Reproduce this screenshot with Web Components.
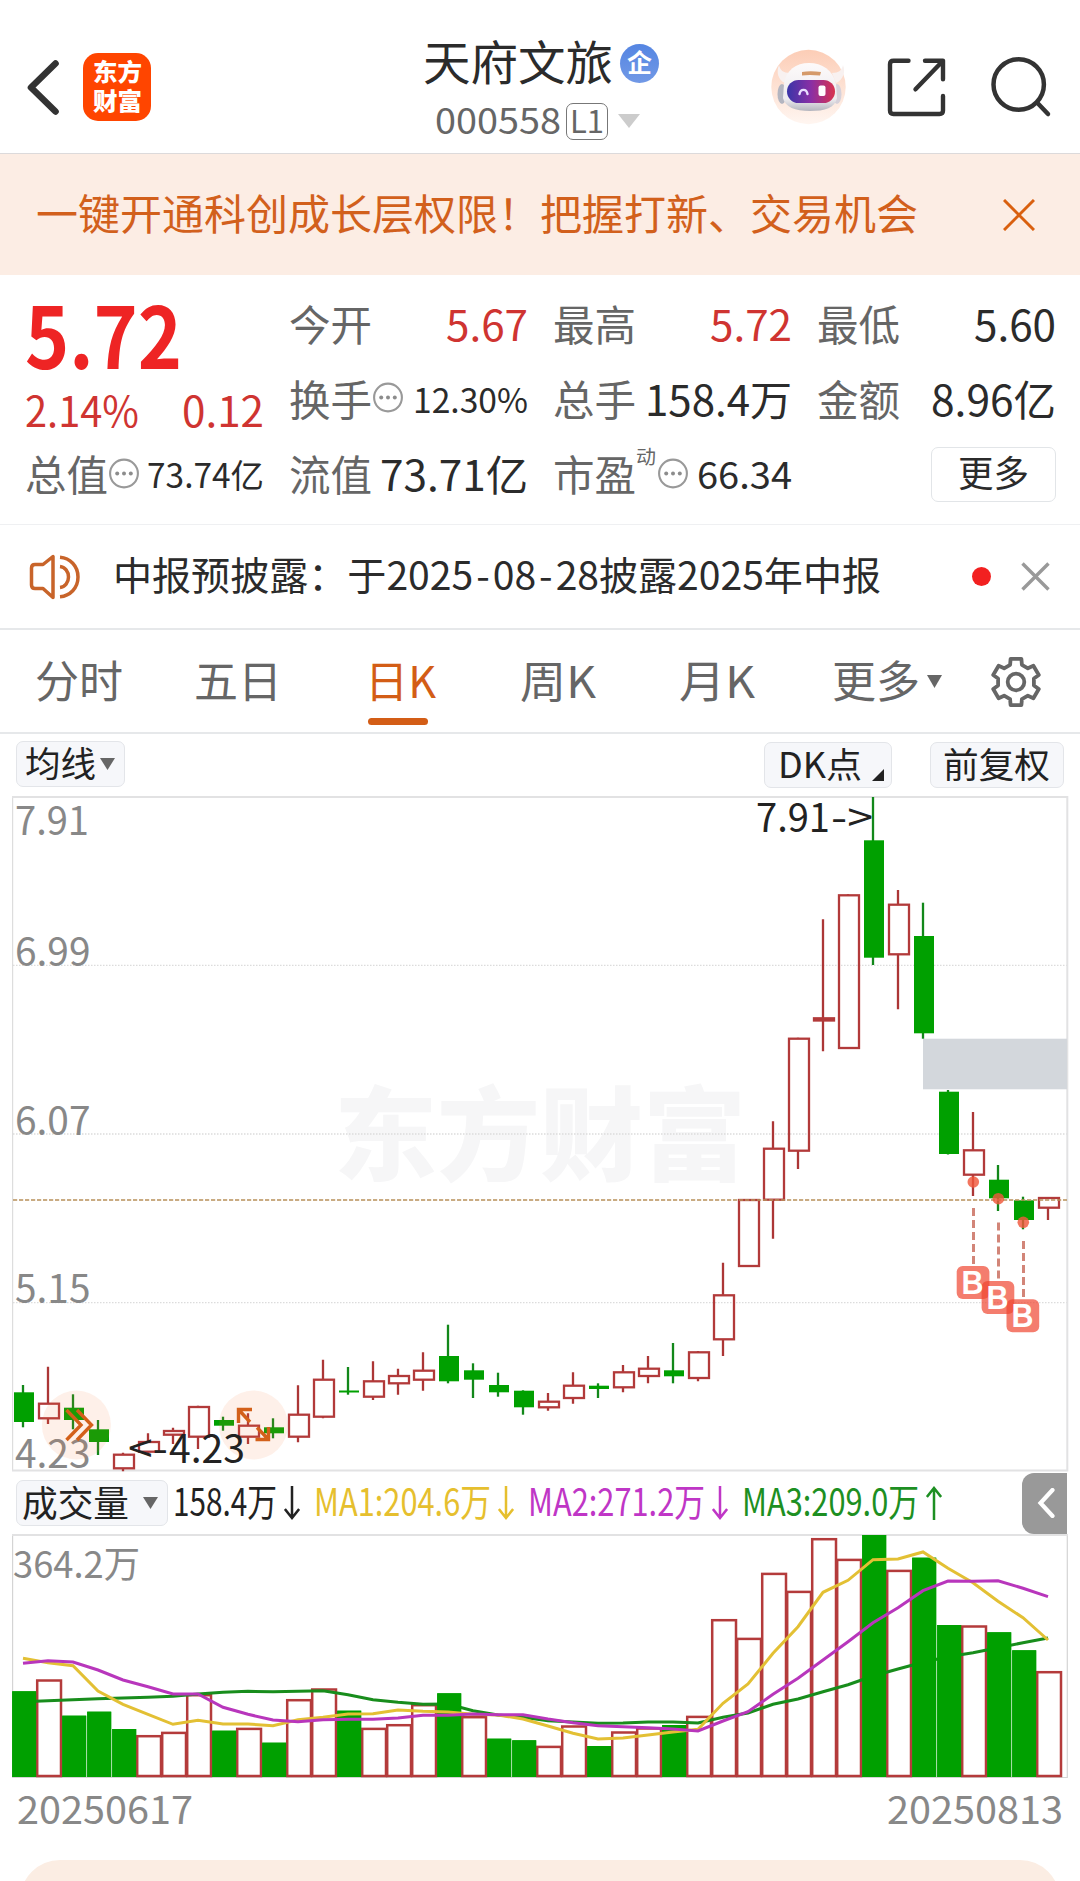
<!DOCTYPE html>
<html lang="zh-CN">
<head>
<meta charset="utf-8">
<title>天府文旅 000558</title>
<style>
body{margin:0;background:#fff;width:1080px;height:1881px;overflow:hidden;font-family:"Noto Sans CJK SC","Noto Sans",sans-serif;color:#2b2b2b}
</style>
</head>
<body>
<stock-page></stock-page>
<script>
const define = (name, html, setup) => customElements.define(name, class extends HTMLElement {
  connectedCallback() {
    if (this.shadowRoot) return;
    const t = document.createElement('template');
    t.innerHTML = html;
    this.attachShadow({mode: 'open'}).appendChild(t.content.cloneNode(true));
    if (setup) setup(this, this.shadowRoot);
  }
});

/* A single line of text set to an exact width: w = width, s = font size, fw = weight */
define('fit-text', `<style>
:host{display:flex;align-items:center;flex:none;line-height:1;white-space:pre}
span{display:inline-block;transform-origin:0 50%}
</style><span><slot></slot></span>`, (el, root) => {
  const w = +el.getAttribute('w'), s = +el.getAttribute('s');
  const span = root.querySelector('span');
  el.style.width = w + 'px';
  el.style.height = s + 'px';
  el.style.fontSize = s + 'px';
  if (el.hasAttribute('fw')) el.style.fontWeight = el.getAttribute('fw');
  const k = w / span.getBoundingClientRect().width;
  span.style.transform = `translateY(${-0.066 * s}px) scaleX(${k})`;
});

define('info-dot', `<style>:host{display:block;flex:none;width:30px;height:31px}svg{display:block}</style>
<svg width="30" height="31" viewBox="0 0 30 31"><circle cx="15" cy="15.5" r="13.9" fill="none" stroke="#999" stroke-width="2.1"/><g fill="#8c8c8c"><circle cx="8.2" cy="15.5" r="2"/><circle cx="15" cy="15.5" r="2"/><circle cx="21.8" cy="15.5" r="2"/></g></svg>`);

define('quote-cell', `<style>:host{display:flex;align-items:center;height:75px}
.l{display:flex;align-items:center;color:#666}.v{margin-left:auto;display:flex}</style>
<div class="l"><slot name="label"></slot></div><div class="v"><slot></slot></div>`);

define('chip-button', `<style>:host{display:flex;align-items:center;box-sizing:border-box;flex:none;height:46px;border:1.5px solid #e3e5e9;border-radius:7px;background:#f6f7fa;color:#222}</style><slot></slot>`);

define('app-header', `<style>
:host{display:flex;box-sizing:border-box;height:154px;border-bottom:1px solid #dcdadb;background:#fff}
svg{display:block;flex:none}
.logo{display:flex;flex-direction:column;align-items:center;gap:5px;box-sizing:border-box;width:68px;height:68px;margin:53px 0 0 24px;padding-top:8px;border-radius:15px;background:#ff4500;color:#fff}
.mid{margin-left:272px;width:236px}
.r1{display:flex;align-items:center;height:46px;margin-top:39px}
.badge{display:flex;align-items:center;justify-content:center;width:39px;height:39px;border-radius:50%;margin:3px 0 0 7px;background:linear-gradient(#5585e2,#7199e6);color:#fff}
.r2{display:flex;align-items:center;height:36px;margin:18px 0 0 12px;color:#666}
.l1{display:flex;align-items:center;justify-content:center;box-sizing:border-box;width:42px;height:37px;border:1.5px solid #777;border-radius:7px;margin-left:5px}
</style>
<svg style="margin:58px 0 0 24px" width="35" height="60" viewBox="24 58 35 60"><path d="M55.5 63.5 31 87.5l24.500 24" fill="none" stroke="#333" stroke-width="6.6" stroke-linejoin="round" stroke-linecap="round"/></svg>
<div class="logo"><fit-text w="49" s="24" fw="900">东方</fit-text><fit-text w="49" s="24" fw="900">财富</fit-text></div>
<div class="mid">
 <div class="r1"><fit-text w="190" s="47">天府文旅</fit-text><div class="badge"><fit-text w="25" s="25" fw="700">企</fit-text></div></div>
 <div class="r2"><fit-text w="126" s="35.5">000558</fit-text><div class="l1"><fit-text w="34" s="31">L1</fit-text></div>
 <svg style="margin-left:10px" width="22" height="14"><path d="M0 0h22L11 14z" fill="#ccc"/></svg></div>
</div>
<svg style="margin:49px 0 0 111px" width="76" height="76" viewBox="770 49 76 76">
 <defs><linearGradient id="bg" x2="0" y2="1"><stop offset="0" stop-color="#fccdb6"/><stop offset="1" stop-color="#fff6f1"/></linearGradient>
 <linearGradient id="vz"><stop offset="0" stop-color="#3a35a8"/><stop offset=".5" stop-color="#8a2fa5"/><stop offset="1" stop-color="#d8334f"/></linearGradient>
 <linearGradient id="hd" x2="0" y2="1"><stop offset="0" stop-color="#fdfafa"/><stop offset=".75" stop-color="#eeecef"/><stop offset="1" stop-color="#b4b5be"/></linearGradient></defs>
 <circle cx="808.500" cy="87" r="37.200" fill="url(#bg)"/>
 <path d="M779 65c1 5 4 8 11 8l-5 10c-7-3-9-11-6-18zM843 65c-1 5-4 8-11 8l4 10c7-3 10-11 7-18z" fill="#f8f1f0"/>
 <ellipse cx="782" cy="94" rx="4.500" ry="10" fill="#b3b5c0"/><ellipse cx="837" cy="94" rx="4.500" ry="10" fill="#d6d1da"/>
 <path d="M784 84c2-14 12-21 25-21s24 7 27 21l1 14c-2 10-12 13-27 13s-25-4-27-13z" fill="url(#hd)"/>
 <path d="M802 72q8-1.500 19 0l-1 3.500q-11-1-18 0z" fill="#d59a6a"/>
 <rect x="787" y="80" width="48" height="23" rx="11.500" fill="url(#vz)"/>
 <path d="M799.500 94c1-5.500 7-5.500 8 0" fill="none" stroke="#e9ddff" stroke-width="2.400" stroke-linecap="round"/><rect x="818.500" y="85.500" width="7" height="10.500" rx="2" fill="#fff"/>
</svg>
<svg style="margin:54px 0 0 38px" width="66" height="66" viewBox="884 54 66 66" fill="none" stroke="#333" stroke-width="4.400" stroke-linecap="round" stroke-linejoin="round"><path d="M908.500 60.800H893.500q-3.500 0-3.500 3.500V110.500q0 3.500 3.500 3.500h46q3.500 0 3.500-3.500V96M925 60.800h18v18.500M943 60.800 915.500 89.300"/></svg>
<svg style="margin:54px 0 0 38px" width="66" height="66" viewBox="988 54 66 66" fill="none" stroke="#333" stroke-width="4.500" stroke-linecap="round"><circle cx="1018.700" cy="84.500" r="25.200"/><path d="m1037.500 103 10.500 11"/></svg>
`);

define('promo-banner', `<style>:host{display:flex;align-items:center;box-sizing:border-box;height:121px;padding:0 45px 0 36px;background:#fcede4;color:#d2601c;justify-content:space-between}svg{display:block}</style>
<fit-text w="882" s="42"><slot></slot></fit-text>
<svg width="32" height="32"><path d="M1 1 31 31M31 1 1 31" stroke="#d9600f" stroke-width="3"/></svg>`);

define('quote-panel', `<style>
:host{display:flex;gap:25px;box-sizing:border-box;height:250px;padding:12px 24px 0 25px;border-bottom:1px solid #eff0f2}
.c{width:239px;flex:none}
.c>quote-cell{position:relative;top:1px}
.p{height:100px;display:flex;align-items:center;color:#ee2424}
.q{height:50px;display:flex;align-items:center;justify-content:space-between}
.red{color:#cf3431}
.btn{display:flex;align-items:center;justify-content:center;box-sizing:border-box;width:125px;height:55px;border:1.5px solid #e2e5e8;border-radius:7px;margin-top:-3px}
</style>
<div class="c">
 <div class="p"><fit-text w="157" s="85" fw="700">5.72</fit-text></div>
 <div class="q red"><fit-text w="114" s="42">2.14%</fit-text><fit-text w="82" s="42">0.12</fit-text></div>
 <quote-cell><fit-text slot="label" w="83" s="42">总值</fit-text><info-dot slot="label" style="margin:-5px 0 0 1px"></info-dot><fit-text w="117" s="33.500">73.74亿</fit-text></quote-cell>
</div>
<div class="c">
 <quote-cell><fit-text slot="label" w="83" s="42">今开</fit-text><fit-text class="red" w="82" s="42">5.67</fit-text></quote-cell>
 <quote-cell><fit-text slot="label" w="83" s="42">换手</fit-text><info-dot slot="label" style="margin:-6px 0 0 1px"></info-dot><fit-text w="115" s="34.500">12.30%</fit-text></quote-cell>
 <quote-cell><fit-text slot="label" w="83" s="42">流值</fit-text><fit-text w="148" s="42">73.71亿</fit-text></quote-cell>
</div>
<div class="c">
 <quote-cell><fit-text slot="label" w="83" s="42">最高</fit-text><fit-text class="red" w="82" s="42">5.72</fit-text></quote-cell>
 <quote-cell><fit-text slot="label" w="83" s="42">总手</fit-text><fit-text w="147" s="42">158.4万</fit-text></quote-cell>
 <quote-cell><fit-text slot="label" w="83" s="42">市盈</fit-text><fit-text slot="label" w="20" s="19.500" style="margin-bottom:38px">动</fit-text><info-dot slot="label" style="margin:-5px 0 0 2px"></info-dot><fit-text w="95" s="37">66.34</fit-text></quote-cell>
</div>
<div class="c">
 <quote-cell><fit-text slot="label" w="83" s="42">最低</fit-text><fit-text w="82" s="42">5.60</fit-text></quote-cell>
 <quote-cell><fit-text slot="label" w="83" s="42">金额</fit-text><fit-text w="125" s="42">8.96亿</fit-text></quote-cell>
 <quote-cell><div class="btn"><fit-text w="71" s="36" style="margin-top:-3px">更多</fit-text></div></quote-cell>
</div>`);

define('notice-bar', `<style>:host{display:flex;align-items:center;box-sizing:border-box;height:105px;padding-left:29px;border-bottom:2px solid #e6e8ea}svg{display:block;flex:none}i{width:19px;height:19px;border-radius:50%;background:#f22020;margin:0 30px 0 91px}</style>
<svg width="52" height="46" viewBox="0 0 52 46" fill="none" stroke="#c8642a" stroke-width="3.500" stroke-linejoin="round"><path d="M24 2.500v41L14 34.500H6Q2.500 34.500 2.500 31V14Q2.500 10.500 6 10.500h8z"/><path d="M31 12.500c5 .5 8.500 5 8.500 10.500S36 33 31 33.500M31 3.300C41 4 49 12 49 23s-8 19-18 19.700"/></svg>
<fit-text w="768" s="39" style="margin-left:32px"><slot></slot></fit-text>
<i></i><svg width="29" height="29"><path d="M1.500 1.500 27.500 27.500M27.500 1.500 1.500 27.500" stroke="#999" stroke-width="3.400"/></svg>`);

define('period-tabs', `<style>:host{display:flex;box-sizing:border-box;height:104px;border-bottom:2px solid #e6e8ea;color:#666}
.t{display:flex;flex-direction:column;height:102px;flex:none}.t fit-text{margin-top:30px}
.on{color:#d35d16}.on b{display:block;width:60px;height:7px;border-radius:4px;background:#d35d16;margin:14px 0 0 3px}svg{display:block;flex:none}</style>
<div class="t" style="margin-left:35px"><fit-text w="88" s="44">分时</fit-text></div>
<div class="t" style="margin-left:71px"><fit-text w="88" s="44">五日</fit-text></div>
<div class="t on" style="margin-left:83px"><fit-text w="71" s="44">日K</fit-text><b></b></div>
<div class="t" style="margin-left:84px"><fit-text w="76" s="44">周K</fit-text></div>
<div class="t" style="margin-left:83px"><fit-text w="76" s="44">月K</fit-text></div>
<div class="t" style="margin-left:77px"><fit-text w="88" s="44">更多</fit-text></div>
<svg style="margin:45px 0 0 7px" width="15" height="13"><path d="M0 0h15L7.500 13z" fill="#666"/></svg>
<svg style="margin:24px 0 0 46px" width="56" height="56" viewBox="-28 -28 56 56" fill="none" stroke="#666" stroke-width="3.800" stroke-linejoin="round"><circle r="8.300"/><path id="g"/></svg>`, (el, root) => {
  /* six-tooth gear outline */
  const p = [];
  for (let i = 0; i < 6; i++) for (const [a, r] of [[-19, 18.2], [-13, 23.8], [13, 23.8], [19, 18.2]]) {
    const t = (i * 60 - 90 + a) * Math.PI / 180;
    p.push((r * Math.cos(t)).toFixed(1) + ' ' + (r * Math.sin(t)).toFixed(1));
  }
  root.getElementById('g').setAttribute('d', 'M' + p.join('L') + 'Z');
});

define('chart-toolbar', `<style>:host{display:flex;box-sizing:border-box;height:62px;padding:7px 16px 0 16px}svg{display:block}.s{flex:1}</style>
<chip-button style="width:109px"><fit-text w="71" s="35.500" style="margin-left:8px">均线</fit-text><svg style="margin-left:4px" width="15" height="12"><path d="M0 0h15L7.500 12z" fill="#666"/></svg></chip-button>
<div class="s"></div>
<chip-button style="width:128px;margin:1px 38px 0 0"><fit-text w="84" s="35.500" style="margin-left:13px">DK点</fit-text><svg style="margin:20px 0 0 10px" width="12" height="12"><path d="M12 0v12H0z" fill="#222"/></svg></chip-button>
<chip-button style="width:134px;margin-top:1px"><fit-text w="107" s="35.500" style="margin-left:12px">前复权</fit-text></chip-button>`);

const X = i => 23 + 25 * i;
/* type, high, body top, body bottom, low (canvas y) */
const candles = `G 1385 1392.3 1422 1427.3|R 1366.7 1402.7 1419.3 1424|G 1394.3 1407.7 1420 1429.3|G 1420 1429.3 1442 1455|R 1452.7 1453.7 1469.3 1471.3|R 1433.3 1441 1452.7 1452.7|R 1427.7 1430 1435.7 1444|R 1405.7 1406 1437.7 1449|G 1416.7 1420 1425.7 1430.7|R 1413.3 1424.7 1437.7 1444|G 1418.3 1427.3 1433.3 1438.3|R 1385.3 1413.7 1437.7 1442.3|R 1359.7 1378.7 1417.7 1418.3|G 1367 1390.5 1392.5 1394.7|R 1361.3 1380.3 1397.7 1400|R 1368.7 1375 1384.3 1394.7|R 1352.3 1369.7 1380.7 1390.7|G 1324.7 1356 1381.3 1383.3|G 1363.3 1370.3 1379.7 1398|G 1372.7 1385 1392.3 1396.7|G 1390.3 1390.7 1407.3 1414.7|R 1393 1400.7 1408.3 1410.7|R 1372.3 1384.7 1399 1403.7|G 1383.3 1385.7 1389 1398|R 1365 1371.3 1388.3 1392.3|R 1356 1367.7 1377 1383.3|G 1343 1370.3 1376.3 1383.3|R 1351 1351.3 1379 1381.3|R 1262.7 1294.3 1340.3 1356|R 1199 1199 1267 1267|R 1121.3 1147.7 1200.7 1238.7|R 1037.7 1037.7 1151.7 1169|R 919.3 1017.3 1021.5 1051.3|R 894.3 894.3 1049 1049|G 797 840.3 957.7 965|R 890 903.7 955.3 1009.3|G 902.7 936 1033.3 1038.7|G 1090 1091.7 1154 1154.5|R 1112 1149.3 1175.7 1196|G 1165 1179.7 1198.3 1211|G 1196.7 1200.3 1220 1229.3|R 1197 1197 1208.7 1220`.split('|').map(r => r.split(' ').map((v, i) => i ? +v : v));

define('candle-chart', `<style>:host{display:block;height:676px}svg{display:block;overflow:visible}text{white-space:pre}</style>
<svg width="1080" height="676" viewBox="0 796 1080 676">
<text x="334" y="1173" font-size="102" font-weight="900" fill="#f6f6f7" textLength="412" lengthAdjust="spacingAndGlyphs">东方财富</text>
<g stroke="#dcdcdc" stroke-width="1.300" stroke-dasharray="1.500 1.500"><path d="M13 965.300H1067M13 1134H1067M13 1302.700H1067"/></g>
<path d="M12.600 797V1470.500" stroke="#ddd" stroke-width="1.200"/><path d="M12 797H1067.300V1470.500H12" fill="none" stroke="#e2e2e3" stroke-width="2"/>
<rect x="923" y="1038.700" width="144" height="50.600" fill="#d3d7dc"/>
<g font-size="39.500" fill="#888"><text x="15" y="834.500" textLength="74" lengthAdjust="spacingAndGlyphs">7.91</text><text x="15" y="965.500" textLength="75.500" lengthAdjust="spacingAndGlyphs">6.99</text><text x="15" y="1134.500" textLength="75.500" lengthAdjust="spacingAndGlyphs">6.07</text><text x="15" y="1303" textLength="75.500" lengthAdjust="spacingAndGlyphs">5.15</text><text x="15" y="1467.500" textLength="75.500" lengthAdjust="spacingAndGlyphs">4.23</text></g>
<g id="c"></g>
<path d="M13 1200H1067" stroke="#b8905a" stroke-width="1.700" stroke-dasharray="4.200 1.800"/>
<g fill="#fa7a3a" fill-opacity=".11"><circle cx="76.400" cy="1425" r="34.500"/><circle cx="253.400" cy="1425" r="34.500"/></g>
<g fill="none" stroke="#d3601a" stroke-width="3.400"><path d="m66.500 1410 14.500 15-14.500 15M77 1410l14.500 15-14.500 15"/><path d="M252 1409.500H238.500V1423M238.500 1409.500 250 1422M255.500 1439.500H268.500V1427M268.500 1439.500 257 1427.500"/></g>
<g fill="#222" font-size="39.500"><text y="832"><tspan x="756" textLength="74" lengthAdjust="spacingAndGlyphs">7.91</tspan><tspan x="831" textLength="42" lengthAdjust="spacingAndGlyphs">-&gt;</tspan></text><text y="1463"><tspan x="128" textLength="40" lengthAdjust="spacingAndGlyphs">&lt;-</tspan><tspan x="169" textLength="76" lengthAdjust="spacingAndGlyphs">4.23</tspan></text></g>
<g fill="#f0583c" fill-opacity=".82"><circle cx="973.300" cy="1182" r="5.800"/><circle cx="998.300" cy="1198.700" r="5.800"/><circle cx="1023.300" cy="1222.300" r="5.800"/></g>
<path d="M973.500 1208v57M998.500 1222.500v57M1023.500 1241v57" stroke="#d28578" stroke-width="3" stroke-dasharray="8 4"/>
<g fill="#f04630" fill-opacity=".7"><rect x="956.700" y="1266" width="32.700" height="33" rx="6"/><rect x="981.600" y="1281" width="32.700" height="33" rx="6"/><rect x="1006.500" y="1299.300" width="32.700" height="33" rx="6"/></g>
<g font-family="Liberation Sans" font-weight="700" font-size="33" fill="#fff"><text x="961.500" y="1294" textLength="22" lengthAdjust="spacingAndGlyphs">B</text><text x="986.500" y="1309" textLength="22" lengthAdjust="spacingAndGlyphs">B</text><text x="1011.500" y="1327.300" textLength="22" lengthAdjust="spacingAndGlyphs">B</text></g>
</svg>`, (el, root) => {
  root.getElementById('c').innerHTML = candles.map(([k, h, t, b, l], i) => {
    const x = X(i);
    return k === 'G'
      ? `<path d="M${x} ${h}V${l}" stroke="#12881a" stroke-width="2.3"/><rect x="${x - 9}" y="${t}" width="20" height="${b - t}" fill="#00a000"/>`
      : `<path d="M${x} ${h}V${t + 1}M${x} ${b - 1}V${l}" stroke="#ac3636" stroke-width="2.3"/><rect x="${x - 9}" y="${t + 1}" width="20" height="${Math.max(b - t - 2, 1)}" fill="none" stroke="#b23a3a" stroke-width="2.3"/>`;
  }).join('');
});

define('flow-arrow', `<style>:host{display:block;flex:none;width:16px;height:34px}:host([up]){transform:scaleY(-1)}svg{display:block}</style><svg width="16" height="34" fill="none" stroke="currentColor" stroke-width="2.500"><path d="M8 0v32M.9 23 8 32l7.100-9"/></svg>`);

define('volume-head', `<style>:host{display:flex;align-items:center;height:62px;padding-left:16px}chip-button{width:152px}svg{display:block}
.y{color:#e6bf2e}.m{color:#bf36c6}.g{color:#1d8f22}.k{color:#222}
.pull{display:flex;align-items:center;justify-content:center;width:45px;height:61px;border-radius:12px 0 0 12px;background:#999;margin-left:80px}</style>
<chip-button><fit-text w="107" s="36" style="margin-left:5px">成交量</fit-text><svg style="margin-left:14px" width="15" height="12"><path d="M0 0h15L7.500 12z" fill="#666"/></svg></chip-button>
<fit-text class="k" w="104" s="38" style="margin-left:5px">158.4万</fit-text><flow-arrow class="k" style="margin-left:7px"></flow-arrow>
<fit-text class="y" w="177" s="38" style="margin-left:14px">MA1:204.6万</fit-text><flow-arrow class="y" style="margin-left:7px"></flow-arrow>
<fit-text class="m" w="177" s="38" style="margin-left:14px">MA2:271.2万</fit-text><flow-arrow class="m" style="margin-left:7px"></flow-arrow>
<fit-text class="g" w="177" s="38" style="margin-left:14px">MA3:209.0万</fit-text><flow-arrow class="g" up style="margin-left:7px"></flow-arrow>
<div class="pull"><svg width="18" height="30" style="margin-left:2px"><path d="M15.500 2 3.500 15l12 13" fill="none" stroke="#fff" stroke-width="4.200" stroke-linecap="round"/></svg></div>`);

/* values below are thirds of a pixel down from y=1520 */
const Y = v => +(1520 + v / 3).toFixed(1);
const bars = 'G514 R478 G587 G575 G627 R645 R635 R522 G632 R623 G668 R537 R505 G572 R623 R612 R552 G520 R588 G656 G661 R677 R616 G678 R634 R622 G615 R587 R297 R353 R158 R212 R54 R116 G45 R149 G113 G315 R316 G337 G391 R453'.split(' ');
const ma1 = [415,428,437,513,553,583,613,601,612,612,617,599,592,582,581,570,574,576,583,585,597,618,640,657,654,645,636,628,550,492,400,320,217,181,119,117,96,145,188,244,293,360];
const ma2 = [430,422,426,450,480,500,522,522,562,583,600,605,599,598,598,594,586,586,582,584,584,597,608,617,620,623,627,633,603,575,523,475,420,365,308,263,212,183,184,182,205,230];
const ma3 = [545,542,539,536,534,532,529,522,517,514,515,514,512,524,539,547,553,552,572,585,592,602,606,610,609,606,606,609,592,579,553,537,515,494,468,447,427,410,398,383,368,354];

define('volume-chart', `<style>:host{display:block;height:246px}svg{display:block}</style>
<svg width="1080" height="246" viewBox="0 1534 1080 246">
<path d="M12.600 1535V1777.500H1067.300V1535" fill="none" stroke="#d4d4d4" stroke-width="1.200"/><path d="M12 1535H1068" stroke="#e2e2e3" stroke-width="2"/>
<text x="13" y="1578" font-size="37" fill="#888" textLength="127" lengthAdjust="spacingAndGlyphs">364.2万</text>
<g id="v"></g></svg>`, (el, root) => {
  const line = (a, c) => `<polyline points="${a.map((v, i) => X(i) + ',' + Y(v)).join(' ')}" fill="none" stroke="${c}" stroke-width="3"/>`;
  let red = '', green = '';
  bars.forEach((b, i) => {
    const y = Y(+b.slice(1));
    if (b[0] === 'R') red += `<rect x="${X(i) - 10.8}" y="${y + 1.2}" width="23.800" height="${1776 - y - 1.2}" fill="none" stroke="#b43b3b" stroke-width="2.500"/>`;
    else green += `<rect x="${X(i) - 10.8}" y="${y}" width="24" height="${1777 - y}" fill="#00a000"/>`;
  });
  root.getElementById('v').innerHTML = green.replace(/<rect/g, '<rect') + red + line(ma3, '#188d1c') + green + line(ma1, '#e3c034') + line(ma2, '#b836bc');
});

define('date-axis', `<style>:host{display:flex;justify-content:space-between;align-items:center;box-sizing:border-box;height:80px;padding:0 17px 20px 17px;color:#888}</style>
<fit-text w="176" s="38.500">20250617</fit-text><fit-text w="176" s="38.500">20250813</fit-text>`);

define('bottom-card', `<style>:host{display:block;height:60px;margin:0 20px;border-radius:40px 40px 0 0;background:#fbede3}</style>`);

define('stock-page', `<style>:host{display:flex;flex-direction:column;width:1080px;height:1881px;overflow:hidden;background:#fff}:host>*{flex:none}.h{padding:0 3px}</style>
<app-header></app-header>
<promo-banner>一键开通科创成长层权限！把握打新、交易机会</promo-banner>
<quote-panel></quote-panel>
<notice-bar>中报预披露：于2025<span class="h">-</span>08<span class="h">-</span>28披露2025年中报</notice-bar>
<period-tabs></period-tabs>
<chart-toolbar></chart-toolbar>
<candle-chart></candle-chart>
<volume-head></volume-head>
<volume-chart></volume-chart>
<date-axis></date-axis>
<bottom-card></bottom-card>`);
</script>
</body>
</html>
